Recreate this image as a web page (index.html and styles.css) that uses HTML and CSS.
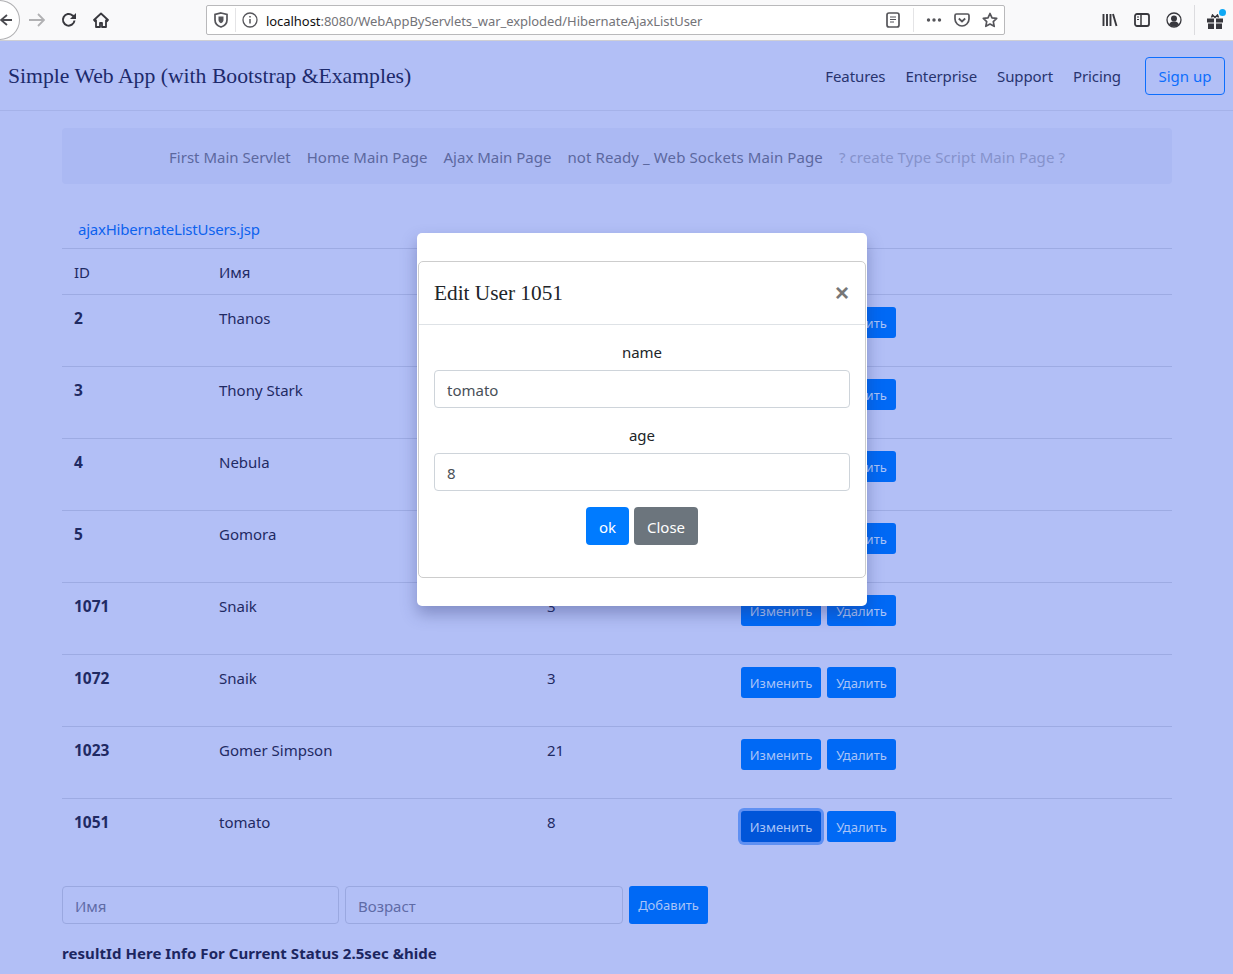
FILE: index.html
```html
<!DOCTYPE html>
<html lang="en">
<head>
    <meta charset="UTF-8">
    <meta name="viewport" content="width=device-width, initial-scale=1.0">
    <title>Ajax Hibernate List Users</title>
    <link rel="stylesheet" href="styles.css">
</head>
<body>
    <div class="toolbar">
        <div class="back">
            <svg class="icon" viewBox="0 0 16 16"><path d="M16 8H5M11 3L5 8l6 5" fill="none" stroke="#4a4a4f" stroke-width="1.8"/></svg>
        </div>
        <svg class="icon forward" viewBox="0 0 16 16"><path d="M0 8h15M9 2l6 6-6 6" fill="none" stroke="#b1b1b3" stroke-width="1.8"/></svg>
        <svg class="icon" viewBox="0 0 16 16"><path d="M13.5 8.5A5.8 5.8 0 1 1 11.5 3.4L13.5 5" fill="none" stroke="#38383d" stroke-width="2"/><path d="M15 1v6H9z" fill="#38383d"/></svg>
        <svg class="icon" viewBox="0 0 16 16"><path d="M8 1.5L1 8l1 1.2L3 8.3V15h4v-4h2v4h4V8.3l1 .9L15 8z" fill="none" stroke="#38383d" stroke-width="1.8" stroke-linejoin="round"/></svg>

        <div class="urlbar">
            <svg class="icon" viewBox="0 0 16 16"><path d="M8 1l6 1.5V8c0 3.5-3 6-6 7-3-1-6-3.500-6-7V2.500z" fill="none" stroke="#55555a" stroke-width="1.7"/><path d="M5.500 4.500h5V8c0 1.500-1.200 2.700-2.500 3.300C6.700 10.700 5.500 9.500 5.500 8z" fill="#55555a"/></svg>
            <span class="url-sep"></span>
            <svg class="icon" viewBox="0 0 16 16"><circle cx="8" cy="8" r="7" fill="none" stroke="#55555a" stroke-width="1.300"/><path d="M8 7v4.500M8 4v1.600" stroke="#55555a" stroke-width="1.500"/></svg>
            <span class="url"><span class="url-host">localhost</span>:8080/WebAppByServlets_war_exploded/HibernateAjaxListUser</span>
            <svg class="icon" viewBox="0 0 16 16"><rect x="2" y="1" width="12" height="14" rx="2" fill="none" stroke="#55555a" stroke-width="1.700"/><path d="M5 5h6M5 7.500h6M5 10h4" stroke="#55555a" stroke-width="1.200"/></svg>
            <span class="url-sep url-sep-right"></span>
            <svg class="icon" viewBox="0 0 16 16"><circle cx="2.500" cy="8" r="1.700" fill="#55555a"/><circle cx="8" cy="8" r="1.700" fill="#55555a"/><circle cx="13.500" cy="8" r="1.700" fill="#55555a"/></svg>
            <svg class="icon" viewBox="0 0 16 16"><path d="M2.500 2h11A1.500 1.500 0 0 1 15 3.500V7c0 4-3.500 7-7 7S1 11 1 7V3.500A1.500 1.500 0 0 1 2.500 2z" fill="none" stroke="#55555a" stroke-width="1.700"/><path d="M4.800 6.500L8 9.500l3.200-3" fill="none" stroke="#55555a" stroke-width="1.800"/></svg>
            <svg class="icon" viewBox="0 0 16 16"><path d="M8 1.500l2 4.300 4.700.6-3.400 3.200.9 4.700L8 12l-4.200 2.300.9-4.700L1.300 6.400 6 5.800z" fill="none" stroke="#55555a" stroke-width="1.700" stroke-linejoin="round"/></svg>
        </div>

        <svg class="icon library" viewBox="0 0 16 16"><path d="M1.500 2v12M5 2v12M8.500 2v12M11 2l3.500 12" stroke="#38383d" stroke-width="1.900" fill="none"/></svg>
        <svg class="icon" viewBox="0 0 16 16"><rect x="1" y="2" width="14" height="12" rx="2" fill="none" stroke="#38383d" stroke-width="1.800"/><path d="M7 2v12" stroke="#38383d" stroke-width="1.500"/><path d="M3 5h2M3 7.500h2" stroke="#38383d"/></svg>
        <svg class="icon" viewBox="0 0 16 16"><circle cx="8" cy="8" r="7" fill="none" stroke="#38383d" stroke-width="1.300"/><circle cx="8" cy="6.500" r="3" fill="#38383d"/><path d="M3 12.500c1-2.500 3-3 5-3s4 .5 5 3c-1.500 1.700-3 2-5 2s-3.500-.3-5-2z" fill="#38383d"/></svg>
        <span class="tool-sep"></span>
        <div class="gift">
            <svg class="icon" viewBox="0 0 16 16"><path d="M0 4.500h7v4H0zM9 4.500h7v4H9zM1 9.500h6V15H1zM9 9.500h6V15H9z" fill="#38383d"/><path d="M4.500 3.500l1-2.500L8 3.500 10.500 1l1 2.500" fill="none" stroke="#38383d" stroke-width="1.500"/></svg>
            <span class="gift-dot"></span>
        </div>
    </div>

    <nav class="navbar">
        <span class="brand">Simple Web App (with Bootstrap &amp;Examples)</span>
        <div class="nav-links">
            <a href="#">Features</a>
            <a href="#">Enterprise</a>
            <a href="#">Support</a>
            <a href="#">Pricing</a>
        </div>
        <a href="#" class="signup">Sign up</a>
    </nav>

    <div class="container">
        <div class="subnav">
            <a href="#">First Main Servlet</a>
            <a href="#">Home Main Page</a>
            <a href="#">Ajax Main Page</a>
            <a href="#" class="wide">not Ready _ Web Sockets Main Page</a>
            <a href="#" class="disabled">? create Type Script Main Page ?</a>
        </div>

        <a href="#" class="page-link">ajaxHibernateListUsers.jsp</a>

        <table class="users">
            <tr class="head">
                <td class="col-id">ID</td>
                <td class="col-name">Имя</td>
                <td class="col-age">Возраст</td>
                <td></td>
            </tr>
            <tr>
                <th>2</th>
                <td>Thanos</td>
                <td></td>
                <td><button class="btn">Изменить</button><button class="btn">Удалить</button></td>
            </tr>
            <tr>
                <th>3</th>
                <td>Thony Stark</td>
                <td></td>
                <td><button class="btn">Изменить</button><button class="btn">Удалить</button></td>
            </tr>
            <tr>
                <th>4</th>
                <td>Nebula</td>
                <td></td>
                <td><button class="btn">Изменить</button><button class="btn">Удалить</button></td>
            </tr>
            <tr>
                <th>5</th>
                <td>Gomora</td>
                <td></td>
                <td><button class="btn">Изменить</button><button class="btn">Удалить</button></td>
            </tr>
            <tr>
                <th>1071</th>
                <td>Snaik</td>
                <td>3</td>
                <td><button class="btn">Изменить</button><button class="btn">Удалить</button></td>
            </tr>
            <tr>
                <th>1072</th>
                <td>Snaik</td>
                <td>3</td>
                <td><button class="btn">Изменить</button><button class="btn">Удалить</button></td>
            </tr>
            <tr>
                <th>1023</th>
                <td>Gomer Simpson</td>
                <td>21</td>
                <td><button class="btn">Изменить</button><button class="btn">Удалить</button></td>
            </tr>
            <tr>
                <th>1051</th>
                <td>tomato</td>
                <td>8</td>
                <td><button class="btn btn-focus">Изменить</button><button class="btn">Удалить</button></td>
            </tr>
        </table>

        <div class="add-form">
            <input type="text" class="add-input" placeholder="Имя">
            <input type="text" class="add-input" placeholder="Возраст">
            <button class="btn btn-add">Добавить</button>
        </div>

        <div class="status">resultId Here Info For Current Status 2.5sec &amp;hide</div>
    </div>

    <div class="modal">
        <div class="modal-inner">
            <div class="modal-header">
                <span class="modal-title">Edit User 1051</span>
                <span class="modal-close">&times;</span>
            </div>
            <div class="modal-body">
                <label>name</label>
                <input type="text" class="field" value="tomato">
                <label>age</label>
                <input type="text" class="field" value="8">
                <div class="modal-actions">
                    <button class="btn-ok">ok</button>
                    <button class="btn-close">Close</button>
                </div>
            </div>
        </div>
    </div>
</body>
</html>
```

FILE: styles.css
```css
* {
    box-sizing: border-box;
}
html, body {
    height: 974px;
    overflow: hidden;
}
body {
    margin: 0;
    background-color: #b2bff6;
    color: #1f2a63;
    font-family: "Noto Sans", Arial, sans-serif;
    font-size: 15px;
    line-height: 24px;
}
a {
    text-decoration: none;
}

/* browser chrome */
.toolbar {
    display: flex;
    align-items: center;
    height: 41px;
    gap: 16px;
    background-color: #f9f9fa;
    border-bottom: 1px solid #cfcfd4;
    overflow: hidden;
}
.icon {
    width: 16px;
    height: 16px;
    flex: none;
    overflow: hidden;
}
.back {
    display: flex;
    align-items: center;
    justify-content: flex-end;
    flex: none;
    width: 41px;
    height: 40px;
    margin-left: -21px;
    padding-right: 7px;
    background-color: #fff;
    border: 1px solid #b1b1b3;
    border-radius: 50%;
}
.forward {
    margin-left: -7px;
}
.urlbar {
    display: flex;
    align-items: center;
    width: 799px;
    height: 30px;
    margin-left: 81px;
    margin-right: 81px;
    padding: 0 6px;
    background-color: #fff;
    border: 1px solid #b9b9bb;
    border-radius: 2px;
    gap: 6px;
}
.url-sep {
    width: 1px;
    height: 24px;
    background-color: #e4e4e6;
}
.url-sep-right {
    margin: 0 6px;
}
.urlbar > svg:nth-of-type(2) {
    margin-right: 2px;
}
.urlbar > svg:nth-of-type(5),
.urlbar > svg:nth-of-type(6) {
    margin-left: 6px;
}
.url {
    flex: 1;
    padding-top: 1px;
    color: #737378;
    font-size: 13px;
    letter-spacing: -0.05px;
    white-space: nowrap;
}
.url-host {
    color: #111;
}
.tool-sep {
    width: 1px;
    height: 30px;
    margin: 0 -4px;
    background-color: #dcdcdf;
}
.gift {
    position: relative;
    width: 16px;
    height: 16px;
}
.gift-dot {
    position: absolute;
    top: -3px;
    right: -3px;
    width: 7px;
    height: 7px;
    background-color: #0fa9f5;
    border-radius: 50%;
}

/* top navigation */
.navbar {
    display: flex;
    align-items: center;
    height: 70px;
    padding: 0 8px;
    border-bottom: 1px solid #a5b2e9;
}
.brand {
    margin-right: auto;
    color: #1d2a6b;
    font-family: "Liberation Serif", Georgia, serif;
    font-size: 21.700px;
}
.nav-links {
    display: flex;
    gap: 20px;
    margin-right: 24px;
    letter-spacing: -0.1px;
}
.nav-links a {
    color: #28346f;
}
.signup {
    display: block;
    width: 80px;
    height: 38px;
    padding-top: 6px;
    color: #0d6efd;
    text-align: center;
    border: 1px solid #0d6efd;
    border-radius: 4px;
}

/* page */
.container {
    width: 1110px;
    margin-left: 62px;
    padding-top: 17px;
}
.subnav {
    display: flex;
    justify-content: center;
    gap: 16px;
    height: 56px;
    padding-top: 17px;
    background-color: #abb9f3;
    border-radius: 4px;
}
.subnav a {
    color: #5c689f;
}
.subnav a.wide {
    letter-spacing: 0.1px;
}
.subnav a.disabled {
    color: #8592cb;
    letter-spacing: 0.06px;
}
.page-link {
    display: block;
    margin: 33px 0 7px 16px;
    color: #0d62ee;
    letter-spacing: -0.23px;
}
.users {
    width: 100%;
    border-collapse: collapse;
    table-layout: fixed;
}
.users tr {
    height: 72px;
    border-top: 1px solid #9dabe3;
}
.users tr.head {
    height: 46px;
}
.users th,
.users td {
    padding: 11px 12px 12px;
    text-align: left;
    vertical-align: top;
}
.users td:last-child {
    padding-top: 12px;
}
.users .head td {
    padding-top: 11px;
    padding-bottom: 10px;
}
.users th {
    font-size: 15.500px;
    font-weight: 700;
}
.col-id {
    width: 145px;
}
.col-name {
    width: 328px;
}
.col-age {
    width: 194px;
}
.btn {
    height: 31px;
    padding: 0;
    color: #a9c3f7;
    background-color: #0069f5;
    font-family: inherit;
    font-size: 13px;
    border: none;
    border-radius: 3px;
}
.users .btn {
    width: 80px;
    margin-right: 6px;
}
.users .btn + .btn {
    width: 69px;
    margin-right: 0;
}
.btn-focus {
    background-color: #0055d9;
    box-shadow: 0 0 0 3px #5f90f2;
}
.add-form {
    display: grid;
    grid-template-columns: 277px 278px 79px;
    gap: 6px;
    margin-top: 15px;
}
.add-input {
    height: 38px;
    padding: 2px 12px 0;
    color: #28346f;
    background-color: transparent;
    font-family: inherit;
    font-size: 15px;
    border: 1px solid #9aa8e0;
    border-radius: 4px;
}
.add-input::placeholder {
    color: #5f6ba6;
}
.btn-add {
    height: 38px;
    padding-top: 1px;
}
.status {
    margin-top: 17px;
    color: #1c2660;
    font-weight: 700;
    letter-spacing: 0.06px;
}

/* edit dialog */
.modal {
    position: absolute;
    left: 417px;
    top: 233px;
    width: 450px;
    height: 373px;
    padding: 28px 1px;
    background-color: #fff;
    border-radius: 5px;
    box-shadow: 0 8px 16px rgba(40, 50, 110, 0.35);
}
.modal-inner {
    height: 317px;
    color: #212529;
    border: 1px solid #cdcdcd;
    border-radius: 5px;
}
.modal-header {
    display: flex;
    align-items: center;
    justify-content: space-between;
    height: 63px;
    padding: 0 16px 0 15px;
    border-bottom: 1px solid #dee2e6;
}
.modal-title {
    font-family: "Liberation Serif", Georgia, serif;
    font-size: 21.300px;
}
.modal-close {
    color: #777;
    font-size: 24px;
    font-weight: 700;
    font-family: "Liberation Sans", Arial, sans-serif;
}
.modal-body {
    display: flex;
    flex-direction: column;
    padding: 15px 15px 0;
    text-align: center;
}
.modal-body label {
    margin-bottom: 6px;
}
.field {
    height: 38px;
    margin-bottom: 15px;
    padding: 1px 12px 0;
    color: #495057;
    font-family: inherit;
    font-size: 15px;
    border: 1px solid #ced4da;
    border-radius: 4px;
}
.modal-body .field:nth-of-type(2) {
    margin-bottom: 16px;
}
.modal-actions {
    display: flex;
    justify-content: center;
    gap: 5px;
}
.btn-ok,
.btn-close {
    height: 38px;
    padding-top: 2px;
    color: #fff;
    font-family: inherit;
    font-size: 15px;
    border: none;
    border-radius: 4px;
}
.btn-ok {
    width: 43px;
    background-color: #007bff;
}
.btn-close {
    width: 64px;
    background-color: #6c757d;
}
```
